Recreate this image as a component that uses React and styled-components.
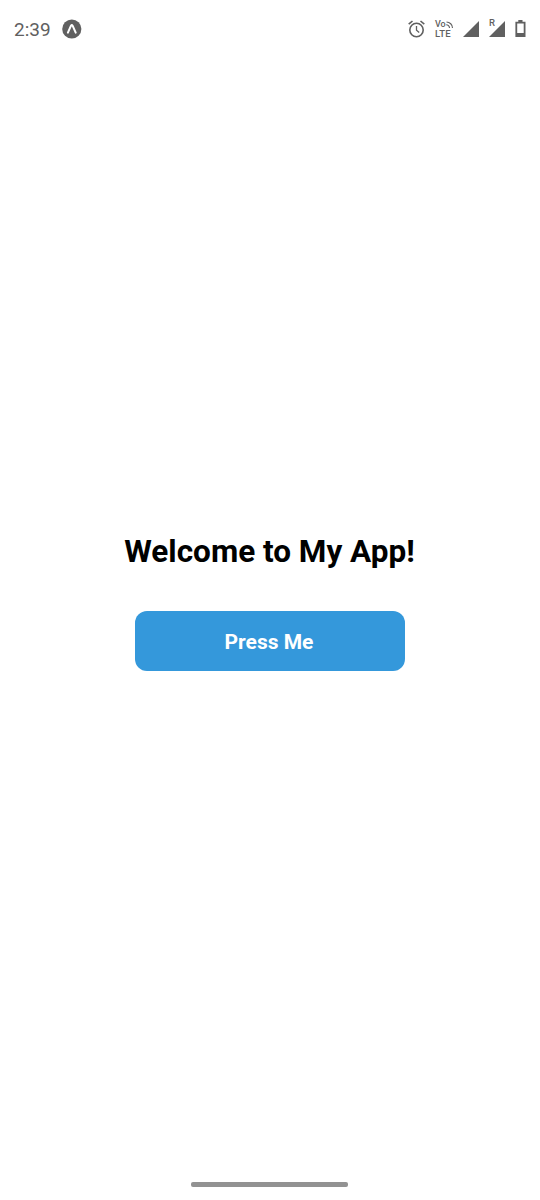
import React from 'react';
import styled, { createGlobalStyle } from 'styled-components';

const GlobalStyle = createGlobalStyle`
  * { box-sizing: border-box; }
  body { margin: 0; background: #fff; font-family: Roboto, sans-serif; }
`;

const Screen = styled.div`
  display: flex;
  flex-direction: column;
  height: 1200px;
  background: #fff;
`;

const StatusBar = styled.header`
  display: flex;
  align-items: center;
  justify-content: space-between;
  height: 58px;
  padding: 0 14px;
  color: #606060;
`;

const StatusGroup = styled.div`
  display: flex;
  align-items: center;
  gap: ${(p) => p.$gap}px;
`;

const Clock = styled.span`
  font-size: 19px;
  line-height: 22px;
  padding-top: 1px;
`;

const Icon = styled.svg`
  display: block;
  flex: none;
`;

const Volte = styled.div`
  display: grid;
  width: 19px;
  margin-right: -1px;
  font-size: 9.5px;
  font-weight: 500;
  line-height: 9px;
  letter-spacing: 0.2px;
`;

const VolteTop = styled.span`
  display: flex;
  align-items: center;
  font-size: 9px;
  height: 8px;
  letter-spacing: 0;
`;

const RoamingSignal = styled.div`
  position: relative;
`;

const RoamingMark = styled.span`
  position: absolute;
  left: 0;
  top: -3px;
  font-size: 9.5px;
  line-height: 10px;
  font-weight: 500;
`;

const Content = styled.main`
  flex: 1;
  display: flex;
  flex-direction: column;
  align-items: center;
  padding-top: 472px;
`;

const Title = styled.h1`
  margin: 0 0 38px;
  padding-right: 1px;
  font-size: 31.5px;
  line-height: 43px;
  font-weight: 700;
  color: #000;
  white-space: nowrap;
`;

const Button = styled.button`
  width: 270px;
  height: 60px;
  padding: 1px 2px 0 0;
  border: 0;
  border-radius: 12px;
  background: #3498db;
  color: #fff;
  font: 700 21px/28px Roboto, sans-serif;
`;

const GestureArea = styled.footer`
  display: flex;
  justify-content: center;
  height: 18px;
  padding-right: 1px;
`;

const GestureBar = styled.div`
  width: 157px;
  height: 5px;
  border-radius: 2px;
  background: #929292;
`;

function AppBadge() {
  return (
    <Icon width="20" height="20" viewBox="0 0 20 20">
      <circle cx="9.8" cy="10" r="9.6" fill="#606060" />
      <path d="M5.9 13.6 L9 6.7 Q9.8 5.5 10.6 6.7 L13.7 13.6" fill="none" stroke="#fff" strokeWidth="2" strokeLinecap="round" strokeLinejoin="round" />
    </Icon>
  );
}

function AlarmIcon() {
  return (
    <Icon width="17" height="18" viewBox="0 0 17 18" fill="none" stroke="currentColor" strokeWidth="1.6">
      <circle cx="8.5" cy="10" r="6.7" />
      <path d="M8.5 6 V10.2 L11.2 12.6" strokeWidth="1.3" />
      <path d="M0.7 4.2 L4.5 1 M12.5 1 L16.3 4.2" />
    </Icon>
  );
}

function VolteIcon() {
  return (
    <Volte>
      <VolteTop>
        Vo
        <Icon width="8" height="7" viewBox="0 0 8 7" fill="none" stroke="currentColor" strokeWidth="1.1">
          <path d="M0.5 1 A6 6 0 0 1 6.5 7 M0.2 3.7 A3.3 3.3 0 0 1 3.5 7" />
        </Icon>
      </VolteTop>
      LTE
    </Volte>
  );
}

function SignalIcon() {
  return (
    <Icon width="16" height="16" viewBox="0 0 16 16">
      <path d="M0 16 L16 0 V16 Z" fill="currentColor" />
    </Icon>
  );
}

function BatteryIcon() {
  return (
    <Icon width="11" height="18" viewBox="0 0 11 18">
      <path d="M3.3 0 H7.5 V1.7 H10.5 V17 H0.4 V1.7 H3.3 Z M2.2 3.6 V13 H8.7 V3.6 Z" fill="currentColor" fillRule="evenodd" />
    </Icon>
  );
}

export default function App() {
  return (
    <>
      <GlobalStyle />
      <Screen>
        <StatusBar>
          <StatusGroup $gap={11}>
            <Clock>2:39</Clock>
            <AppBadge />
          </StatusGroup>
          <StatusGroup $gap={10}>
            <AlarmIcon />
            <VolteIcon />
            <SignalIcon />
            <RoamingSignal>
              <RoamingMark>R</RoamingMark>
              <SignalIcon />
            </RoamingSignal>
            <BatteryIcon />
          </StatusGroup>
        </StatusBar>
        <Content>
          <Title>Welcome to My App!</Title>
          <Button type="button">Press Me</Button>
        </Content>
        <GestureArea>
          <GestureBar />
        </GestureArea>
      </Screen>
    </>
  );
}
